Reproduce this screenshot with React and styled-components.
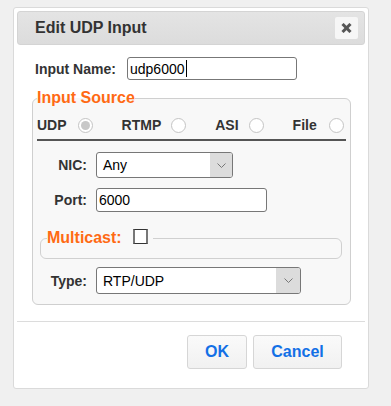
import React from "react";
import styled, { createGlobalStyle } from "styled-components";

const Global = createGlobalStyle`
  html, body { margin: 0; padding: 0; background: #f0f0f0; }
  body { font-family: "Liberation Sans", Arial, sans-serif; color: #333; }
  * { box-sizing: border-box; }
`;

const Page = styled.div`
  padding: 7px 0 0 13px;
  height: 406px;
`;

const Dialog = styled.div`
  width: 356px;
  background: #fff;
  border: 1px solid #dadada;
  border-radius: 3px;
  padding: 3px;
`;

const TitleBar = styled.div`
  height: 34px;
  display: flex;
  align-items: center;
  justify-content: space-between;
  padding: 0 6px 0 17px;
  border: 1px solid #d4d4d4;
  border-radius: 3px;
  background: linear-gradient(#e4e4e4, #dcdcdc);
`;

const Title = styled.span`
  font-size: 16px;
  font-weight: bold;
  color: #333;
`;

const CloseButton = styled.button`
  width: 23px;
  height: 22px;
  padding: 0;
  border: none;
  border-radius: 2px;
  background: #f6f6f6;
  display: flex;
  align-items: center;
  justify-content: center;
`;

const Content = styled.div`
  padding: 12px 14px 0 15px;
`;

const TopRow = styled.div`
  display: flex;
  align-items: center;
  padding-left: 3px;
`;

const TopLabel = styled.label`
  width: 92px;
  font-size: 14px;
  font-weight: bold;
  color: #333;
`;

const Field = styled.div`
  width: ${(p) => p.$w}px;
  height: ${(p) => p.$h}px;
  border: 1px solid #777;
  border-radius: 3px;
  background: #fff;
  display: flex;
  align-items: center;
  padding-left: 2px;
  font-size: 14px;
  color: #000;
`;

const Caret = styled.span`
  display: inline-block;
  width: 1px;
  height: 17px;
  background: #000;
  margin-left: 1px;
`;

const Fieldset = styled.fieldset`
  margin: 9px 0 0 0;
  padding: 0 4px 10px 4px;
  border: 1px solid #cfcfcf;
  border-radius: 6px;
  background: #f8f8f8;
  min-width: 0;
`;

const Legend = styled.legend`
  padding: 0;
  font-size: 16px;
  line-height: 18px;
  font-weight: bold;
  color: #ff6a14;
`;

const SourceRow = styled.div`
  display: flex;
  align-items: center;
  height: 34px;
  padding-top: 4px;
  border-bottom: 2px solid #555;
`;

const SourceItem = styled.label`
  display: flex;
  align-items: center;
  margin-right: 29px;
  font-size: 14px;
  font-weight: bold;
  color: #333;
  &:last-child { margin-right: 0; }
`;

const Radio = styled.span`
  width: 15px;
  height: 15px;
  margin-left: ${(p) => p.$gap}px;
  border-radius: 50%;
  border: 1px solid #c4c4c4;
  background: #fff;
  display: flex;
  align-items: center;
  justify-content: center;
  &::after {
    content: "";
    width: 9px;
    height: 9px;
    border-radius: 50%;
    background: ${(p) => (p.$checked ? "#c8c8c8" : "transparent")};
  }
`;

const FormRow = styled.div`
  display: flex;
  align-items: center;
  margin-top: ${(p) => p.$mt}px;
`;

const FormLabel = styled.label`
  width: 50px;
  margin-right: 9px;
  text-align: right;
  font-size: 14px;
  font-weight: bold;
  color: #333;
`;

const Select = styled.div`
  width: ${(p) => p.$w}px;
  height: ${(p) => p.$h}px;
  border: 1px solid #777;
  border-radius: 3px;
  background: #fff;
  display: flex;
  overflow: hidden;
  font-size: 14px;
  color: #000;
`;

const SelectValue = styled.span`
  flex: 1;
  display: flex;
  align-items: center;
  padding-left: 6px;
`;

const SelectArrow = styled.span`
  width: ${(p) => p.$w}px;
  background: #dcdcdc;
  display: flex;
  align-items: center;
  justify-content: center;
`;

const SubFieldset = styled.fieldset`
  margin: 17px 4px 0 3px;
  padding: 0 6px 11px 6px;
  border: 1px solid #d0d0d0;
  border-radius: 6px;
  min-width: 0;
`;

const SubLegend = styled.legend`
  padding: 0 5px 0 0;
  font-size: 16px;
  line-height: 18px;
  font-weight: bold;
  color: #ff6a14;
  display: flex;
  align-items: flex-start;
`;

const Checkbox = styled.span`
  width: 15px;
  height: 15px;
  margin-left: 11px;
  background: #fff;
  border: 1px solid #333;
  border-left: 2px solid #777;
  border-right: 2px solid #777;
`;

const Separator = styled.div`
  height: 1px;
  background: #dcdcdc;
  margin-top: 16px;
`;

const Footer = styled.div`
  display: flex;
  justify-content: flex-end;
  gap: 6px;
  padding: 13px 23px 16px 0;
`;

const Button = styled.button`
  width: ${(p) => p.$w}px;
  height: 34px;
  border: 1px solid #d6d6d6;
  border-radius: 3px;
  background: linear-gradient(#fafafa, #f1f1f1);
  font-family: "Liberation Sans", Arial, sans-serif;
  font-size: 16px;
  font-weight: bold;
  color: #1370e6;
  padding: 0;
`;

const Chevron = () => (
  <svg width="9" height="5" viewBox="0 0 9 5">
    <polyline points="0.5,0.5 4.5,4.5 8.5,0.5" fill="none" stroke="#777" strokeWidth="1" />
  </svg>
);

const CloseIcon = () => (
  <svg width="11" height="10" viewBox="0 0 11 10">
    <g stroke="#555" strokeWidth="3" strokeLinecap="butt">
      <line x1="1.5" y1="1" x2="9.5" y2="9" />
      <line x1="9.5" y1="1" x2="1.5" y2="9" />
    </g>
  </svg>
);

const sources = [
  { name: "UDP", checked: true, gap: 11 },
  { name: "RTMP", gap: 10 },
  { name: "ASI", gap: 10 },
  { name: "File", gap: 12 },
];

export default function App() {
  return (
    <>
      <Global />
      <Page>
        <Dialog>
          <TitleBar>
            <Title>Edit UDP Input</Title>
            <CloseButton aria-label="close">
              <CloseIcon />
            </CloseButton>
          </TitleBar>
          <Content>
            <TopRow>
              <TopLabel>Input Name:</TopLabel>
              <Field $w={170} $h={23}>
                udp6000
                <Caret />
              </Field>
            </TopRow>
            <Fieldset>
              <Legend>Input Source</Legend>
              <SourceRow>
                {sources.map((s) => (
                  <SourceItem key={s.name}>
                    {s.name}
                    <Radio $checked={s.checked} $gap={s.gap} />
                  </SourceItem>
                ))}
              </SourceRow>
              <FormRow $mt={11}>
                <FormLabel>NIC:</FormLabel>
                <Select $w={137} $h={26}>
                  <SelectValue>Any</SelectValue>
                  <SelectArrow $w={22}>
                    <Chevron />
                  </SelectArrow>
                </Select>
              </FormRow>
              <FormRow $mt={10}>
                <FormLabel>Port:</FormLabel>
                <Field $w={171} $h={24}>6000</Field>
              </FormRow>
              <SubFieldset>
                <SubLegend>
                  Multicast:
                  <Checkbox />
                </SubLegend>
              </SubFieldset>
              <FormRow $mt={8}>
                <FormLabel>Type:</FormLabel>
                <Select $w={205} $h={27}>
                  <SelectValue>RTP/UDP</SelectValue>
                  <SelectArrow $w={24}>
                    <Chevron />
                  </SelectArrow>
                </Select>
              </FormRow>
            </Fieldset>
          </Content>
          <Separator />
          <Footer>
            <Button $w={60}>OK</Button>
            <Button $w={89}>Cancel</Button>
          </Footer>
        </Dialog>
      </Page>
    </>
  );
}
